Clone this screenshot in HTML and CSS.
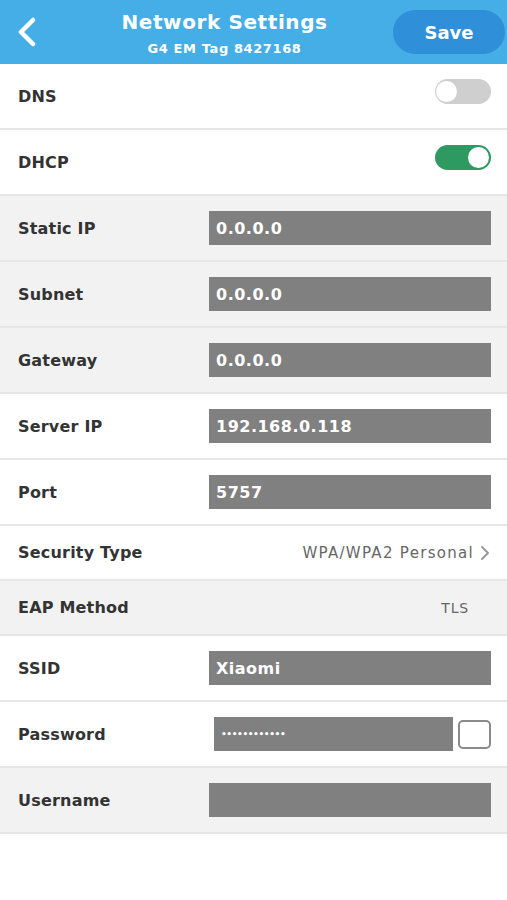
FILE: index.html
```html
<!DOCTYPE html>
<html lang="en">
<head>
<meta charset="UTF-8">
<title>Network Settings</title>
<meta name="viewport" content="width=device-width, initial-scale=1">
<link rel="stylesheet" href="styles.css">
</head>
<body>

<div class="header">
  <div class="back">
    <svg width="22" height="30" viewBox="0 0 22 30"><path d="M17 3 L5 15 L17 27" fill="none" stroke="#fff" stroke-width="4.5" stroke-linecap="round" stroke-linejoin="round"/></svg>
  </div>
  <div class="title">
    <div class="main">Network Settings</div>
    <div class="sub">G4 EM Tag 8427168</div>
  </div>
  <div class="save">Save</div>
</div>

<div class="row">
  <div class="label">DNS</div>
  <div class="toggle"><div class="knob"></div></div>
</div>

<div class="row">
  <div class="label">DHCP</div>
  <div class="toggle on"><div class="knob"></div></div>
</div>

<div class="row grey">
  <div class="label">Static IP</div>
  <div class="field">0.0.0.0</div>
</div>

<div class="row grey">
  <div class="label">Subnet</div>
  <div class="field">0.0.0.0</div>
</div>

<div class="row grey">
  <div class="label">Gateway</div>
  <div class="field">0.0.0.0</div>
</div>

<div class="row">
  <div class="label">Server IP</div>
  <div class="field">192.168.0.118</div>
</div>

<div class="row">
  <div class="label">Port</div>
  <div class="field">5757</div>
</div>

<div class="row short">
  <div class="label">Security Type</div>
  <div class="value">WPA/WPA2 Personal
    <svg width="12" height="16" viewBox="0 0 12 16"><path d="M3 2 L9 8 L3 14" fill="none" stroke="#9a9a9a" stroke-width="2" stroke-linecap="round" stroke-linejoin="round"/></svg>
  </div>
</div>

<div class="row short grey">
  <div class="label">EAP Method</div>
  <div class="value tls">TLS</div>
</div>

<div class="row">
  <div class="label">SSID</div>
  <div class="field">Xiaomi</div>
</div>

<div class="row">
  <div class="label">Password</div>
  <div class="pw">
    <div class="field dots">••••••••••••</div>
    <div class="check"></div>
  </div>
</div>

<div class="row grey">
  <div class="label">Username</div>
  <div class="field"></div>
</div>

</body>
</html>
```

FILE: styles.css
```css
body{
margin:0;
background:#fff;
font-family:"DejaVu Sans","Open Sans",sans-serif;
color:#2b2b2b;
}

.header{
height:64px;
background:#45aee6;
display:flex;
align-items:center;
color:#fff;
box-sizing:border-box;
padding:0 2px 0 16px;
}

.back{
width:24px;
display:flex;
align-items:center;
}

.title{
flex:1;
text-align:center;
padding-left:16px;
}

.title .main{
font-size:20px;
font-weight:bold;
letter-spacing:0.6px;
margin-top:2px;
}

.title .sub{
font-size:13px;
font-weight:bold;
letter-spacing:0.6px;
margin-top:7px;
}

.save{
width:112px;
height:44px;
border-radius:22px;
background:#2f8fd8;
display:flex;
align-items:center;
justify-content:center;
font-size:18px;
font-weight:bold;
}

.row{
height:66px;
box-sizing:border-box;
border-bottom:2px solid #e6e6e6;
display:flex;
align-items:center;
justify-content:space-between;
padding:0 16px 0 18px;
background:#fff;
}

.row.grey{background:#f2f2f2}
.row.short{height:55px}

.label{
font-size:16px;
font-weight:bold;
letter-spacing:0.2px;
color:#333;
}

.field{
width:282px;
height:34px;
box-sizing:border-box;
background:#808080;
color:#fff;
font-size:16px;
font-weight:bold;
letter-spacing:0.5px;
padding-left:7px;
display:flex;
align-items:center;
}

.pw{
display:flex;
align-items:center;
gap:5px;
}

.pw .field{width:239px}
.dots{font-size:9px;letter-spacing:-0.4px}

.check{
width:33px;
height:29px;
border:2px solid #8a8a8a;
border-radius:5px;
background:#fff;
box-sizing:border-box;
}

.value{
font-size:15px;
letter-spacing:1.3px;
color:#666;
display:flex;
align-items:center;
gap:5px;
}

.tls{padding-right:22px;font-size:14px;letter-spacing:0.8px}

.toggle{
width:56px;
height:25px;
border-radius:13px;
background:#cfcfcf;
position:relative;
margin-bottom:10px;
}

.toggle .knob{
position:absolute;
left:1px;
top:2px;
width:21px;
height:21px;
border-radius:50%;
background:#fff;
}

.toggle.on{background:#2e9a62}
.toggle.on .knob{left:auto;right:2px}
```
